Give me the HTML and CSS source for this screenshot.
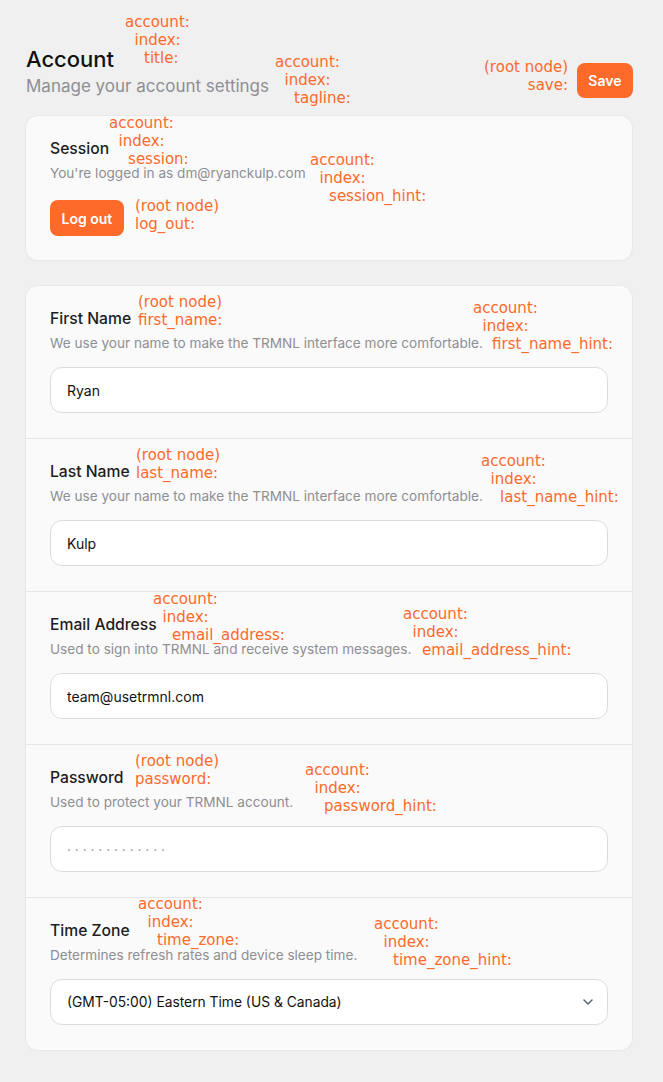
FILE: index.html
```html
<!DOCTYPE html>
<html lang="en">
<head>
<meta charset="utf-8">
<title>Account</title>
<link rel="stylesheet" href="styles.css">
</head>
<body>
<div class="page">
  <header class="header">
    <div class="titles">
      <h1 class="title">Account</h1>
      <p class="tagline">Manage your account settings</p>
    </div>
    <button class="btn">Save</button>
    <span class="note note-title">account:
  index:
    title:</span>
    <span class="note note-tagline">account:
  index:
    tagline:</span>
    <span class="note note-save">(root node)
save:</span>
  </header>

  <section class="card session">
    <div class="label">Session</div>
    <div class="hint">You're logged in as dm@ryanckulp.com</div>
    <button class="btn btn-logout">Log out</button>
    <span class="note note-session">account:
  index:
    session:</span>
    <span class="note note-session-hint">account:
  index:
    session_hint:</span>
    <span class="note note-logout">(root node)
log_out:</span>
  </section>

  <section class="card form">
    <div class="field">
      <div class="label">First Name</div>
      <div class="hint">We use your name to make the TRMNL interface more comfortable.</div>
      <div class="input">Ryan</div>
      <span class="note note-fn">(root node)
first_name:</span>
      <span class="note note-fn-hint">account:
  index:
    first_name_hint:</span>
    </div>
    <div class="field">
      <div class="label">Last Name</div>
      <div class="hint">We use your name to make the TRMNL interface more comfortable.</div>
      <div class="input">Kulp</div>
      <span class="note note-ln">(root node)
last_name:</span>
      <span class="note note-ln-hint">account:
  index:
    last_name_hint:</span>
    </div>
    <div class="field">
      <div class="label">Email Address</div>
      <div class="hint">Used to sign into TRMNL and receive system messages.</div>
      <div class="input">team@usetrmnl.com</div>
      <span class="note note-email">account:
  index:
    email_address:</span>
      <span class="note note-email-hint">account:
  index:
    email_address_hint:</span>
    </div>
    <div class="field">
      <div class="label">Password</div>
      <div class="hint">Used to protect your TRMNL account.</div>
      <div class="input input-password">·············</div>
      <span class="note note-pw">(root node)
password:</span>
      <span class="note note-pw-hint">account:
  index:
    password_hint:</span>
    </div>
    <div class="field">
      <div class="label">Time Zone</div>
      <div class="hint">Determines refresh rates and device sleep time.</div>
      <div class="input select">
        <span>(GMT-05:00) Eastern Time (US &amp; Canada)</span>
        <svg class="chevron" width="10" height="6" viewBox="0 0 10 6" aria-hidden="true"><path d="M1 1l4 4 4-4" fill="none" stroke="#5f6472" stroke-width="1.5" stroke-linecap="round" stroke-linejoin="round"/></svg>
      </div>
      <span class="note note-tz">account:
  index:
    time_zone:</span>
      <span class="note note-tz-hint">account:
  index:
    time_zone_hint:</span>
    </div>
  </section>
</div>
</body>
</html>
```

FILE: styles.css
```css
* { box-sizing: border-box; }
html, body { margin: 0; padding: 0; }
body {
  background: #f0f0f0;
  font-family: Inter, "Noto Sans", sans-serif;
  color: #1d1d1f;
}
.page {
  position: relative;
  padding: 45px 30px 32px 26px;
}
.header {
  display: flex;
  justify-content: space-between;
  align-items: flex-end;
}
.title {
  margin: 0;
  font-size: 22px;
  line-height: 28px;
  font-weight: 500;
  color: #111;
}
.tagline {
  margin: 1px 0 0;
  font-size: 17px;
  line-height: 24px;
  color: #8e8e93;
}
.btn {
  border: 0;
  background: #fd6a2a;
  color: #fff;
  font-family: Inter, sans-serif;
  font-weight: 600;
  font-size: 14px;
  height: 35px;
  padding: 0 11.5px;
  border-radius: 8px;
}
.card {
  position: relative;
  background: #fafafa;
  border-radius: 12px;
  box-shadow: 0 0 0 1px #e9e9e9, 0 1px 2px rgba(0,0,0,0.04);
}
.session {
  margin-top: 18px;
  margin-right: 1px;
  padding: 21px 24px 24px;
}
.btn-logout {
  display: block;
  margin-top: 17px;
  height: 36px;
  padding: 0 11.5px;
}
.form {
  margin-top: 26px;
  margin-right: 1px;
}
.field {
  position: relative;
  padding: 21px 24px 25px;
  border-bottom: 1px solid #e6e6e6;
}
.field:last-child { border-bottom: 0; }
.label {
  font-size: 15.7px;
  line-height: 24px;
  font-weight: 500;
  color: #1d1d1f;
}
.hint {
  margin-top: 2px;
  font-size: 13.6px;
  line-height: 20px;
  color: #8e8e93;
}
.input {
  margin-top: 14px;
  height: 46px;
  background: #fff;
  border: 1px solid #dcdcdc;
  border-radius: 12px;
  padding: 0 16px;
  display: flex;
  align-items: center;
  font-size: 14px;
  color: #111;
}
.input-password {
  color: #9a9a9a;
  letter-spacing: 3.8px;
}
.select { justify-content: space-between; padding-right: 14px; font-size: 13.8px; }
.chevron { display: block; }

.note {
  position: absolute;
  font-family: "DejaVu Sans", sans-serif;
  font-size: 15px;
  line-height: 18px;
  color: #fd6a2a;
  white-space: pre;
}
.note-title { top: 13px; left: 125px; }
.note-tagline { top: 53px; left: 275px; }
.note-save { top: 58px; right: 95px; text-align: right; }
.note-session { top: -2px; left: 83px; }
.note-session-hint { top: 35px; left: 284px; }
.note-logout { top: 81px; left: 109px; }
.note-fn { top: 7px; left: 112px; }
.note-fn-hint { top: 13px; left: 447px; }
.note-ln { top: 7px; left: 110px; }
.note-ln-hint { top: 13px; left: 455px; }
.note-email { top: -2px; left: 127px; }
.note-email-hint { top: 13px; left: 377px; }
.note-pw { top: 7px; left: 109px; }
.note-pw-hint { top: 16px; left: 279px; }
.note-tz { top: -3px; left: 112px; }
.note-tz-hint { top: 17px; left: 348px; }
```
